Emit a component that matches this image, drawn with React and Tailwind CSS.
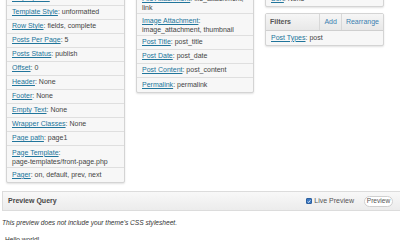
import React from 'react'

const Row = ({ label, value, wrap }) => (
  <div
    className={
      wrap
        ? 'px-[5px] py-[1.5px] leading-[9px] border-b border-[#dfdfdf] last:border-b-0'
        : 'px-[5px] h-[14px] flex items-center border-b border-[#dfdfdf] last:border-b-0 whitespace-nowrap overflow-hidden'
    }
  >
    <span>
      <a className="text-[#21759b] underline">{label}</a>
      {wrap ? ':' : ': '}
      {wrap ? <br /> : null}
      {value}
    </span>
  </div>
)

const Panel = ({ children, className = '' }) => (
  <div
    className={
      'border border-[#d4d4d4] bg-[#f7f7f7] rounded-[2px] shadow-[0_1px_2px_rgba(0,0,0,0.12)] ' +
      className
    }
  >
    {children}
  </div>
)

export default function App() {
  return (
    <div className="w-[400px] h-[240px] overflow-hidden bg-white text-[7px] text-[#444] font-['Liberation_Sans',Arial,sans-serif]">
      <div className="flex items-start gap-[11px] pl-[6px] h-[191px]">
        {/* left column */}
        <Panel className="w-[119px] -mt-[9px]">
          <Row label="Display Title" value="Hello" />
          <Row label="Template Style" value="unformatted" />
          <Row label="Row Style" value="fields, complete" />
          <Row label="Posts Per Page" value="5" />
          <Row label="Posts Status" value="publish" />
          <Row label="Offset" value="0" />
          <Row label="Header" value="None" />
          <Row label="Footer" value="None" />
          <Row label="Empty Text" value="None" />
          <Row label="Wrapper Classes" value="None" />
          <Row label="Page path" value="page1" />
          <Row label="Page Template" value="page-templates/front-page.php" wrap />
          <Row label="Pager" value="on, default, prev, next" />
        </Panel>

        {/* middle column */}
        <Panel className="w-[118px] -mt-[9px]">
          <div className="px-[5px] py-[1.5px] leading-[9px] border-b border-[#dfdfdf] whitespace-nowrap overflow-hidden">
            <a className="text-[#21759b] underline">File Attachment</a>: file_attachment,
            <br />
            link
          </div>
          <Row label="Image Attachment" value="image_attachment, thumbnail" wrap />
          <Row label="Post Title" value="post_title" />
          <Row label="Post Date" value="post_date" />
          <Row label="Post Content" value="post_content" />
          <Row label="Permalink" value="permalink" />
        </Panel>

        {/* right column */}
        <div className="w-[119px] -mt-[9px] flex flex-col gap-[6px]">
          <Panel>
            <Row label="Sort" value="None" />
          </Panel>
          <Panel>
            <div className="flex h-[17px] border-b border-[#cfcfcf] bg-gradient-to-b from-[#f6f6f6] to-[#e8e8e8]">
              <div className="flex-1 flex items-center px-[4px] font-bold text-[#555]">Filters</div>
              <div className="flex items-center px-[4px] border-l border-[#d8d8d8] text-[#3b7fb0]">Add</div>
              <div className="flex items-center px-[4px] border-l border-[#d8d8d8] text-[#3b7fb0]">Rearrange</div>
            </div>
            <Row label="Post Types" value="post" />
          </Panel>
        </div>
      </div>

      {/* preview bar */}
      <div className="ml-[2px] h-[20px] flex items-center border-t border-b border-l border-[#dcdcdc] bg-gradient-to-b from-[#f8f8f8] to-[#ececec]">
        <div className="flex-1 pl-[5px] font-bold text-[#464646]">Preview Query</div>
        <label className="flex items-center gap-[2px] text-[#555]">
          <span className="w-[6px] h-[6px] rounded-[1px] bg-[#3a78c3] border border-[#2c5f9e] flex items-center justify-center">
            <svg width="5" height="5" viewBox="0 0 10 10">
              <path d="M2 5 L4 7.5 L8.5 2" stroke="#fff" strokeWidth="2" fill="none" />
            </svg>
          </span>
          Live Preview
        </label>
        <button className="ml-[10px] mr-[7px] h-[11px] w-[29px] rounded-full border border-[#cfcfcf] bg-white text-[#555] text-[6.6px] leading-none">
          Preview
        </button>
      </div>

      <div className="pl-[2px] pt-[7px] italic text-[6.6px] text-[#333]">
        This preview does not include your theme's CSS stylesheet.
      </div>
      <div className="pl-[5px] pt-[7px] text-[6.6px] text-[#333]">Hello world!</div>
    </div>
  )
}
